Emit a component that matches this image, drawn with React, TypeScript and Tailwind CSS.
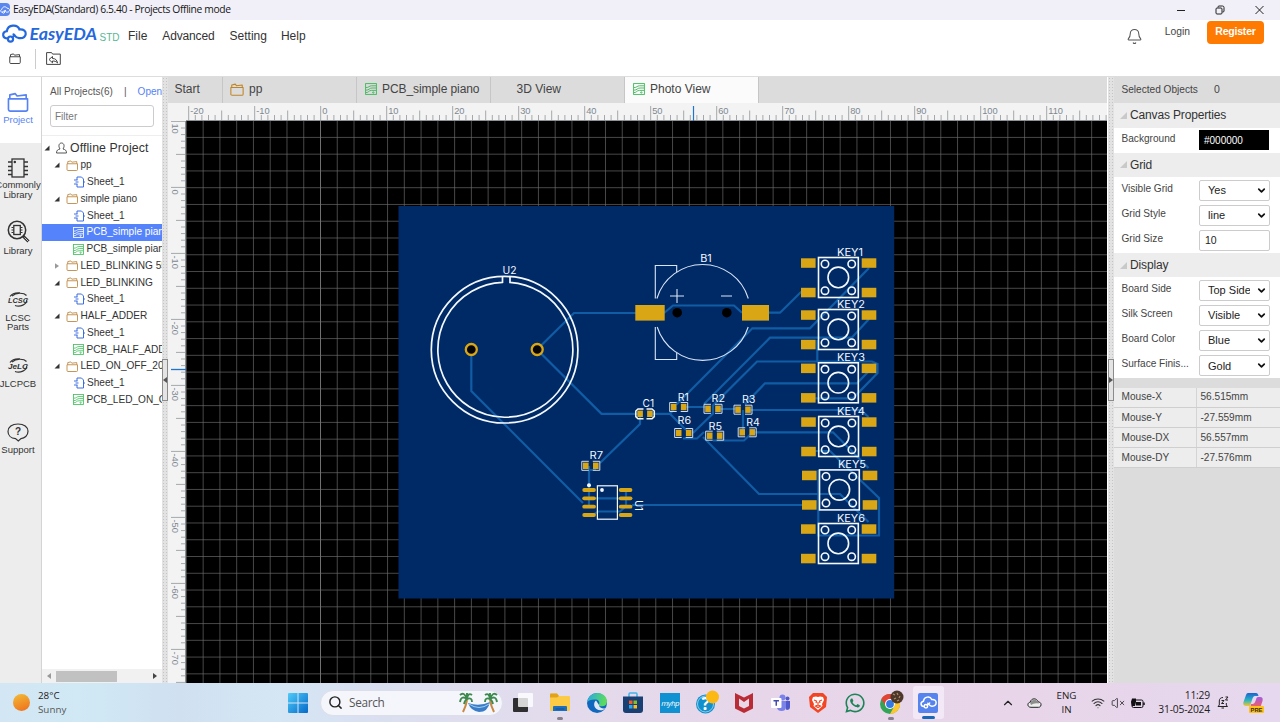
import React from "react";
import { Bell, ChevronDown, ChevronUp, Wifi, VolumeX, Search } from "lucide-react";
import { FaWhatsapp } from "react-icons/fa";

const WHITE = "#f4f8ff";
const GOLD = "#d9a616";
const TRACE = "#115da5";

/* ---------- small icons ---------- */

function FolderIcon({ className, color }: { className: string; color: string }) {
  return (
    <svg className={className} viewBox="0 0 24 22" fill="none" stroke={color} strokeWidth="1.8" strokeLinejoin="round">
      <path d="M1.5 7.5h21v11.5a2 2 0 0 1-2 2h-17a2 2 0 0 1-2-2z" />
      <path d="M3 7.5V3.2l6-1.4 2 2.6 10-1.2v4.3" />
    </svg>
  );
}

function SheetIcon({ className }: { className: string }) {
  return (
    <svg className={className} viewBox="0 0 11 12" fill="none" stroke="#3c6fe0" strokeWidth="1">
      <path d="M3 4V1h4.5L9.5 3v8H3V8M0 4h3.5M0 8h3.5M1.5 6h3M9.5 6H11" />
    </svg>
  );
}

function PcbIcon({ className, color }: { className: string; color: string }) {
  return (
    <svg className={className} viewBox="0 0 12 12" fill="none" stroke={color} strokeWidth=".9">
      <rect x=".6" y=".6" width="10.800" height="10.800" />
      <path d="M1 4.600C4 4.600 4 2.800 6.500 2.800H11M1 7.200C4.500 7.200 4 5 7 5h4M1 9.600c3 0 2.500-2.200 5.500-2.200H11" />
      <circle cx="8.300" cy="9.500" r=".7" />
    </svg>
  );
}

function CloudLogo({ className, color }: { className: string; color: string }) {
  return (
    <svg className={className} viewBox="0 0 26 20" fill="none" stroke={color} strokeWidth="2.300" strokeLinecap="round">
      <path d="M6 16.200C.5 16 0 9.200 5.200 8 6 .8 15.500-.6 18 5.300c4.500-.6 7 2.200 6.700 5.500-.3 3.500-3.500 5-6.700 4.800-3 0-4-2.300-6-4.500" />
      <circle cx="9" cy="15.800" r="2.600" />
      <path d="M11.300 14l3.500-3.200" />
    </svg>
  );
}

function Arrow({ open, className }: { open: boolean; className: string }) {
  return open ? (
    <svg className={className} viewBox="0 0 6 6"><path d="M5.500.5v5h-5z" fill="#333" /></svg>
  ) : (
    <svg className={className} viewBox="0 0 6 6"><path d="M1 .2l4 2.800-4 2.800z" fill="#999" /></svg>
  );
}

/* ---------- header ---------- */

function TitleBar() {
  return (
    <div className="flex h-[19.500px] shrink-0 items-center bg-[#f1f0f8]">
      <div className="flex h-[13px] w-[10px] items-center overflow-hidden rounded-r-sm bg-[#5b86ef]">
        <CloudLogo className="h-[8px] w-[10px] shrink-0" color="#fff" />
      </div>
      <span className="ml-[3px] flex-1 whitespace-nowrap font-['Open_Sans',sans-serif] text-[10.300px] tracking-[-0.370px] text-[#161616]">
        EasyEDA(Standard) 6.5.40 - Projects Offline mode
      </span>
      <svg className="mr-[14px] h-[12px] w-[92px]" viewBox="0 0 92 12" fill="none" stroke="#222" strokeWidth="1">
        <path d="M3 6.500h8M81.500 2l8 8M89.500 2l-8 8" />
        <rect x="42" y="4" width="6" height="6" rx="1" />
        <path d="M44 3.500V3a1 1 0 0 1 1-1h3.500a1.500 1.500 0 0 1 1.500 1.500V7a1 1 0 0 1-1 1h-.5" />
      </svg>
    </div>
  );
}

function MenuBar() {
  return (
    <div className="flex h-[29.500px] shrink-0 items-start bg-white text-[12px] text-[#333]">
      <svg className="h-[29px] w-[128px] shrink-0" viewBox="0 0 128 29">
        <g transform="translate(1.500 4.500)" fill="none" stroke="#2468dc" strokeWidth="2.200" strokeLinecap="round">
          <path d="M6.500 14C.3 14 .3 7.600 5.300 6.700 6.500-.3 16-.5 18 5c4.500-.3 6.500 2 6.200 4.600-.4 3-3.200 4.300-6.700 4-3-.2-3.500-1.500-5.500-3.800" />
          <circle cx="9" cy="14.600" r="2.600" />
          <path d="M11 12.800l2-2" />
        </g>
        <text x="29.500" y="19.500" textLength="67.500" lengthAdjust="spacingAndGlyphs" fontFamily="Lato" fontWeight="700" fontStyle="italic" fontSize="17" fill="#2468dc">EasyEDA</text>
        <text x="99.500" y="20.500" textLength="20" lengthAdjust="spacingAndGlyphs" fontFamily="Liberation Sans" fontSize="11" fill="#58b794">STD</text>
      </svg>
      <nav className="flex flex-1 gap-[15px] pt-[8px] text-[12px] leading-[16px]">
        <span>File</span>
        <span className="tracking-[-0.150px]">Advanced</span>
        <span>Setting</span>
        <span className="-ml-[1px]">Help</span>
      </nav>
      <Bell className="mr-[22px] mt-[8px] h-[17px] w-[17px]" color="#555" strokeWidth={1.500} />
      <span className="mr-[17px] mt-[5.500px] text-[10.300px] leading-[14px] text-[#444]">Login</span>
      <button className="mr-[16px] mt-[1px] h-[23px] w-[57px] rounded-[4px] bg-[#ff7a00] text-[10.500px] font-bold tracking-[-0.200px] text-white">
        Register
      </button>
    </div>
  );
}

function ToolBar() {
  return (
    <div className="flex h-[28px] shrink-0 items-start border-b border-[#ddd] bg-white">
      <FolderIcon className="ml-[9px] mt-[4px] h-[11px] w-[12px]" color="#333" />
      <div className="ml-[14px] h-[20px] w-px bg-[#ccc]" />
      <svg className="ml-[10px] mt-[3px] h-[13px] w-[15px]" viewBox="0 0 15 13" fill="none" stroke="#444" strokeWidth="1">
        <path d="M.6 12.400V.6h5l1 1.500h7.700v10.300z" />
        <path d="M3 7.500l3.500-3v2c3 0 4.500 1.500 5 4.500-1.500-1.800-3-2-5-2v1.800z" />
      </svg>
    </div>
  );
}

/* ---------- left navigation ---------- */

function NavItem({ icon, lines, className }: { icon: React.ReactNode; lines: string[]; className: string }) {
  return (
    <div className={`flex flex-col items-center text-center text-[9.500px] leading-[9.700px] text-[#333] ${className}`}>
      {icon}
      {lines.map((l) => (
        <span key={l} className="whitespace-nowrap">{l}</span>
      ))}
    </div>
  );
}

function LogoMark({ text }: { text: string }) {
  return (
    <svg className="h-[16px] w-[22px]" viewBox="0 0 22 16" fill="none" stroke="#333" strokeWidth="1.200">
      <path d="M5 4C9 .3 17 .5 19.500 3.500M8 13.500c5 2 12-1 11.800-6M3 4.500C5 1.500 9 .5 13 .8" />
      <text x="1" y="11.300" textLength={20} lengthAdjust="spacingAndGlyphs" fontFamily="Liberation Sans" fontSize="8" fontWeight="700" fontStyle="italic" fill="#333" stroke="none">{text}</text>
    </svg>
  );
}

function SideNav() {
  return (
    <div className="flex w-[42px] shrink-0 flex-col overflow-hidden border-r border-[#d4d4d4] bg-[#ededed]">
      <div className="-mr-px h-[66px] shrink-0 bg-white pt-[15px]">
        <div className="flex w-[36px] flex-col items-center text-center text-[9.500px] leading-[10px] text-[#5583f5]">
          <FolderIcon className="mb-[3px] h-[20px] w-[24px]" color="#5583f5" />
          Project
        </div>
      </div>
      <NavItem
        className="-ml-[2px] w-[40px] pt-[15px]"
        icon={
          <svg className="mb-[2px] h-[20px] w-[22px]" viewBox="0 0 22 20" fill="none" stroke="#333" strokeWidth="1.300">
            <rect x="5" y="1" width="12" height="18" />
            <path d="M1 4h4M1 8.500h4M1 12.500h4M1 16.500h4M17 4h4M17 8.500h4M17 12.500h4M17 16.500h4" />
            <circle cx="7.800" cy="4" r=".6" />
          </svg>
        }
        lines={["Commonly", "Library"]}
      />
      <NavItem
        className="w-[36px] pt-[21px]"
        icon={
          <svg className="mb-[3px] h-[23px] w-[23px]" viewBox="0 0 23 23" fill="none" stroke="#333" strokeWidth="1.500">
            <circle cx="10" cy="10" r="8.700" />
            <path d="M16 16l5.500 5.500" strokeWidth="3" />
            <path d="M17.500 17.500l4 4" stroke="#ededed" strokeWidth=".8" />
            <rect x="6.800" y="5.500" width="6.500" height="9" strokeWidth="1.300" />
            <path d="M4.500 7.500h2M4.500 10h2M4.500 12.500h2M13.500 7.500h2M13.500 10h2M13.500 12.500h2" strokeWidth="1" />
          </svg>
        }
        lines={["Library"]}
      />
      <NavItem className="w-[36px] pt-[35.500px]" icon={<div className="mb-[5px] h-[16px]"><LogoMark text="LCSC" /></div>} lines={["LCSC", "Parts"]} />
      <NavItem className="w-[36px] pt-[26px]" icon={<div className="mb-[4.500px] h-[16px]"><LogoMark text="JeLC" /></div>} lines={["JLCPCB"]} />
      <NavItem
        className="w-[36px] pt-[35px]"
        icon={
          <svg className="mb-[2.500px] h-[19px] w-[22px]" viewBox="0 0 22 19" fill="none" stroke="#333" strokeWidth="1.200">
            <path d="M8.500 15.600C4 15.300 1 12.400 1 8.500 1 4 5 1 11 1s10 3 10 7.300c0 4.500-3.500 7-7 7.300L11.300 18z" />
            <text x="11" y="12" textAnchor="middle" fontFamily="Liberation Sans" fontWeight="700" fontSize="10" fill="#333" stroke="none">?</text>
          </svg>
        }
        lines={["Support"]}
      />
    </div>
  );
}

type Row = { kind: "folder" | "sheet" | "pcb"; label: string; open?: boolean; selected?: boolean };

const rows: Row[] = [
  { kind: "folder", label: "pp", open: true },
  { kind: "sheet", label: "Sheet_1" },
  { kind: "folder", label: "simple piano", open: true },
  { kind: "sheet", label: "Sheet_1" },
  { kind: "pcb", label: "PCB_simple piano", selected: true },
  { kind: "pcb", label: "PCB_simple piano" },
  { kind: "folder", label: "LED_BLINKING 555", open: false },
  { kind: "folder", label: "LED_BLINKING", open: true },
  { kind: "sheet", label: "Sheet_1" },
  { kind: "folder", label: "HALF_ADDER", open: true },
  { kind: "sheet", label: "Sheet_1" },
  { kind: "pcb", label: "PCB_HALF_ADDER" },
  { kind: "folder", label: "LED_ON_OFF_2024", open: true },
  { kind: "sheet", label: "Sheet_1" },
  { kind: "pcb", label: "PCB_LED_ON_OFF" },
];

function Tree() {
  return (
    <div className="flex w-[120px] shrink-0 flex-col overflow-hidden bg-white text-[10.100px] text-[#333]">
      <div className="flex h-[28px] items-center whitespace-nowrap pl-[8px] text-[10px] text-[#555]">
        <span className="tracking-[0.050px]">All Projects(6)</span>
        <span className="ml-[11px]">|</span>
        <span className="ml-[11px] text-[#5583f5]">Open</span>
      </div>
      <div className="ml-[8px] flex h-[22px] w-[104px] shrink-0 items-center rounded-[3px] border border-[#ccc] pl-[4px] text-[10px] text-[#777]">
        Filter
      </div>
      <div className="mt-[8px] flex h-[22px] shrink-0 items-center whitespace-nowrap border-t border-[#eee] pl-[2px] pt-[3px] text-[12.300px]">
        <Arrow open className="h-[6px] w-[6px] shrink-0" />
        <svg className="ml-[6px] mr-[3px] h-[12px] w-[11px]" viewBox="0 0 11 12" fill="none" stroke="#555" strokeWidth="1">
          <path d="M4 7C2 4 3 1 5.500 1S9 4 7 7c2 .6 3.500 1 3.500 4H.5c0-3 1.500-3.400 3.500-4z" />
        </svg>
        <span className="tracking-[0.100px]">Offline Project</span>
      </div>
      {rows.map((r, i) => (
        <div
          key={i}
          className={`flex h-[16.750px] shrink-0 items-center whitespace-nowrap ${r.selected ? "bg-[#5583fb] text-white" : ""}`}
        >
          {r.kind === "folder" ? (
            <>
              <Arrow open={!!r.open} className="ml-[12px] mr-[6px] h-[6px] w-[6px] shrink-0" />
              <FolderIcon className="mr-[2px] h-[11px] w-[12.500px] shrink-0" color="#bf8a45" />
            </>
          ) : r.kind === "sheet" ? (
            <SheetIcon className="ml-[32px] mr-[2px] h-[12px] w-[11px] shrink-0" />
          ) : (
            <PcbIcon className="ml-[31px] mr-[2.500px] h-[11px] w-[11px] shrink-0" color={r.selected ? "#fff" : "#3fbf5a"} />
          )}
          <span className="-mt-px">{r.label}</span>
        </div>
      ))}
      <div className="mt-auto flex h-[14px] shrink-0 items-center bg-[#f1f1f1]">
        <svg className="ml-[4px] h-[6px] w-[6px]" viewBox="0 0 6 6"><path d="M5 0v6L1 3z" fill="#999" /></svg>
        <div className="ml-[4px] h-[11px] w-[61px] bg-[#c1c1c1]" />
        <svg className="ml-[35px] h-[6px] w-[6px]" viewBox="0 0 6 6"><path d="M1 0v6l4-3z" fill="#444" /></svg>
      </div>
    </div>
  );
}

function Splitter({ dir }: { dir: "left" | "right" }) {
  return (
    <div className="flex w-[6px] shrink-0 flex-col bg-[#e2e2e2] bg-[radial-gradient(#c4c4c4_0.700px,transparent_0.800px)] bg-[length:3px_3px]">
      <div className="mt-[282px] flex h-[42px] w-full items-center justify-center border border-[#8b8b8b] bg-[#e4e4e4]">
        <svg className="h-[6px] w-[4px] shrink-0" viewBox="0 0 4 6">
          <path d={dir === "left" ? "M4 0v6L0 3z" : "M0 0v6l4-3z"} fill="#555" />
        </svg>
      </div>
    </div>
  );
}

/* ---------- centre ---------- */

function Tabs() {
  return (
    <div className="flex h-[26px] shrink-0 items-center bg-[#dcdcdc] text-[12px] text-[#444]">
      <div className="flex h-full w-[55px] items-center border-r border-[#c6c6c6] pb-[2px] pl-[6.500px]">Start</div>
      <div className="flex h-full w-[134px] items-center gap-[5px] border-r border-[#c6c6c6] pb-[2px] pl-[7px]">
        <FolderIcon className="h-[13px] w-[14px]" color="#bf8427" />pp
      </div>
      <div className="flex h-full w-[133.500px] items-center gap-[5px] whitespace-nowrap border-r border-[#c6c6c6] pb-[2px] pl-[8px] tracking-[-0.080px]">
        <PcbIcon className="h-[12px] w-[12px]" color="#3db757" />PCB_simple piano
      </div>
      <div className="flex h-full w-[134px] items-center border-r border-[#c6c6c6] pb-[2px] pl-[26px]">3D View</div>
      <div className="flex h-full w-[134px] items-center gap-[5.500px] border-r border-[#c6c6c6] bg-[#fbfbfb] pb-[2px] pl-[8px]">
        <PcbIcon className="h-[12px] w-[12px]" color="#3db757" />Photo View
      </div>
    </div>
  );
}

const range = (a: number, b: number) => Array.from({ length: b - a + 1 }, (_, i) => a + i);

function TopRuler() {
  return (
    <svg className="block h-[18px] w-[939px] shrink-0 bg-[#f3f3f3]" viewBox="168 103 939 18">
      {range(-20, 119).map((n) => {
        const x = 320.7 + n * 6.6;
        const top = n % 10 === 0 ? 106 : n % 5 === 0 ? 110.5 : 115;
        return (
          <g key={n}>
            <path d={`M${x} ${top}V120`} stroke="#a4a8ac" strokeWidth="1" />
            {n % 10 === 0 && (
              <text x={x + 1.5} y="113.500" fontFamily="Liberation Sans" fontSize="9.300" fill="#7d8891">{n}</text>
            )}
          </g>
        );
      })}
      <path d="M186 120.500H1107" stroke="#8d9297" />
      <path d="M693.500 106V121" stroke="#1f74cc" strokeWidth="1.200" />
    </svg>
  );
}

function LeftRuler() {
  return (
    <svg className="block h-[562px] w-[18px] shrink-0 bg-[#f3f3f3]" viewBox="168 121 18 562">
      {range(-10, 75).map((n) => {
        const y = 187.4 + n * 6.6;
        const left = n % 10 === 0 ? 171 : n % 5 === 0 ? 176 : 181;
        return (
          <g key={n}>
            <path d={`M${left} ${y}H185`} stroke="#a4a8ac" strokeWidth="1" />
            {n % 10 === 0 && (
              <text transform={`translate(171.800 ${y + 2}) rotate(90)`} fontFamily="Liberation Sans" fontSize="9.300" fill="#7d8891">{-n}</text>
            )}
          </g>
        );
      })}
      <path d="M185.500 121V683" stroke="#8d9297" />
      <path d="M171 369.500H186" stroke="#1f74cc" strokeWidth="1.300" />
    </svg>
  );
}

const traces = [
  "M471.300 349.500V391L583 503",
  "M537 349.500L574 313H636",
  "M537 349.500L601.500 413.800H638",
  "M664 313L673 305.500H734L742 312.700",
  "M769 312.700H780L801 292H808",
  "M869 268L810 328.300H752.300L676 405",
  "M869 319L851.700 337.700H770L704 404",
  "M808 398.300H853L877.500 373V364L872 361.500H757L713 405.500V413.500L693 433",
  "M817.300 340V362",
  "M869 371L857 383.300H765L745 404",
  "M748 410H861L868.500 417",
  "M752 432.300H833L868.500 468",
  "M808 451H830L879 498V535.500H818.300V470",
  "M632 505H808",
  "M703 437L759 494H840L868.500 522",
  "M683 438.500H697L704 432",
  "M713 440.500H744L752 433",
  "M743 410V432",
  "M684 407H708M718 409H738",
  "M651 413.800H670L686 430M670 413.800L676 407",
  "M640 415V424L600 463",
  "M596 470H589M589 466V490V506",
  "M589 498.300H626M593 515L598 511.500H620L626 506V490",
];

const keys = [
  { name: "KEY1", dx: 0, dy: 0, tx: 850, ty: 256 },
  { name: "KEY2", dx: 0, dy: 52, tx: 851, ty: 307.7 },
  { name: "KEY3", dx: 0, dy: 105.3, tx: 851, ty: 361 },
  { name: "KEY4", dx: 0.2, dy: 159, tx: 851, ty: 414.7 },
  { name: "KEY5", dx: 1, dy: 212.4, tx: 852, ty: 468.3 },
  { name: "KEY6", dx: 0, dy: 266, tx: 851, ty: 521.7 },
];

const parts = [
  { name: "R1", x: 678.7, y: 407, tx: 683.3, ty: 400.5 },
  { name: "R2", x: 713, y: 408.8, tx: 718.3, ty: 402 },
  { name: "R3", x: 743, y: 409.7, tx: 748.7, ty: 402.7 },
  { name: "R4", x: 747.2, y: 432.3, tx: 753, ty: 425.5 },
  { name: "R5", x: 714.7, y: 435.7, tx: 715.3, ty: 429.7 },
  { name: "R6", x: 683.7, y: 433, tx: 684.3, ty: 423.7 },
  { name: "R7", x: 590.8, y: 465.8, tx: 596.3, ty: 458.5 },
];

function Label({ x, y, w, children }: { x: number; y: number; w: number; children: string }) {
  return (
    <text x={x - w / 2} y={y} textLength={w} lengthAdjust="spacingAndGlyphs" fontFamily="Inter" fontWeight="400" fontSize="10.300" fill={WHITE}>
      {children}
    </text>
  );
}

function Board() {
  return (
    <svg className="block h-[562px] w-[921px] bg-black" viewBox="186 121 921 562">
      <g stroke="#707070" strokeWidth=".65">
        {range(-8, 46).map((n) => <path key={n} d={`M${320.5 + n * 16.764} 121V683`} />)}
        {range(-3, 29).map((n) => <path key={n} d={`M186 ${187.7 + n * 16.764}H1107`} />)}
      </g>
      <path d="M320.500 121V683" stroke="#707070" />
      <rect x="398.500" y="206" width="495.700" height="392.500" fill="#002a66" />
      <g fill="none" stroke={TRACE} strokeWidth="2.200">
        {traces.map((d) => <path key={d} d={d} />)}
      </g>

      {/* buzzer */}
      <g fill="none" stroke={WHITE} strokeWidth="1.700">
        <circle cx="504.600" cy="349.700" r="73.300" />
        <path d="M502.500 276.500V282.300A67.500 67.500 0 1 0 510 282.400V276.700" />
      </g>
      {[471.3, 537.2].map((x) => (
        <circle key={x} cx={x} cy="349.500" r="5.500" fill="#050505" stroke={GOLD} strokeWidth="2.300" />
      ))}
      <Label x={509.5} y={273.5} w={14}>U2</Label>

      {/* battery */}
      <g fill="none" stroke="#d9e4f7" strokeWidth="1.100">
        <path d="M656.900 298.500A47.700 47.700 0 0 1 748.300 298.500" />
        <path d="M657.200 327A47.700 47.700 0 0 0 748.200 327" />
        <path d="M655.300 298.500V265.500H676.700V272M655.300 327V359.500H676.700V352.700" />
        <path d="M670 296H684M677 289V303M721 296H732" />
      </g>
      <rect x="635.300" y="305" width="29.400" height="15.600" fill={GOLD} />
      <rect x="742" y="305" width="27" height="15.600" fill={GOLD} />
      <circle cx="677.200" cy="312.700" r="4.800" fill="#000" />
      <circle cx="726.800" cy="312.700" r="4.800" fill="#000" />
      <Label x={706} y={261.7} w={11.5}>B1</Label>

      {/* push buttons */}
      {keys.map((k) => (
        <g key={k.name}>
          <g transform={`translate(${k.dx} ${k.dy})`}>
            {[[801, 258.3], [861.7, 258.3], [801, 287.8], [861.7, 287.8]].map(([x, y]) => (
              <rect key={`${x}-${y}`} x={x} y={y} width="14.600" height="9.500" fill={GOLD} />
            ))}
            <g fill="none" stroke={WHITE} strokeWidth="1.600">
              <rect x="818.500" y="257.500" width="39.800" height="40" />
              <circle cx="838.300" cy="277.400" r="10.300" />
              {[[825, 264], [851.700, 264], [825, 290.7], [851.700, 290.7]].map(([x, y]) => (
                <circle key={`${x}-${y}`} cx={x} cy={y} r="3.700" />
              ))}
            </g>
          </g>
          <Label x={k.tx} y={k.ty} w={k.name === "KEY1" ? 26 : 28}>{k.name}</Label>
        </g>
      ))}

      {/* chip resistors */}
      {parts.map((p) => (
        <g key={p.name}>
          <path
            d={`M${p.x - 2} ${p.y - 4.5}H${p.x - 9}V${p.y + 4.5}H${p.x - 2}M${p.x + 2} ${p.y - 4.5}H${p.x + 9}V${p.y + 4.5}H${p.x + 2}`}
            fill="none" stroke="#d3def0" strokeWidth="1"
          />
          <rect x={p.x - 7.8} y={p.y - 3.2} width="5.600" height="6.400" fill={GOLD} />
          <rect x={p.x + 2.2} y={p.y - 3.2} width="5.600" height="6.400" fill={GOLD} />
          <Label x={p.tx} y={p.ty} w={p.name === "R1" ? 11 : 13.5}>{p.name}</Label>
        </g>
      ))}

      {/* capacitor */}
      <path d="M643.500 409H638L635.800 411V416.600L638 418.800H643.500M646.500 409H652L654.300 411V416.600L652 418.800H646.500" fill="none" stroke={WHITE} strokeWidth="1.500" />
      <rect x="637.300" y="410.600" width="5.600" height="6.400" fill={GOLD} />
      <rect x="647.100" y="410.600" width="5.600" height="6.400" fill={GOLD} />
      <Label x={648.3} y={407.2} w={11.5}>C1</Label>

      {/* timer chip */}
      {[490, 498.3, 506.7, 515].map((y) => (
        <g key={y} fill={GOLD}>
          <rect x="582.300" y={y - 1.900} width="13.600" height="3.800" rx="1.900" />
          <rect x="618.800" y={y - 1.900} width="13.600" height="3.800" rx="1.900" />
        </g>
      ))}
      <rect x="597.400" y="485.800" width="20" height="33.400" fill="none" stroke={WHITE} strokeWidth="1.200" />
      <circle cx="602" cy="490" r="1.900" fill={WHITE} />
      <circle cx="589" cy="485.300" r="2" fill={WHITE} />
      <g transform="translate(634.700 505.500) rotate(90)"><Label x={0} y={0} w={10.5}>U1</Label></g>
    </svg>
  );
}

/* ---------- properties ---------- */

function Section({ title }: { title: string }) {
  return (
    <div className="flex h-[24.500px] shrink-0 items-center bg-[#ededed] pl-[6px] text-[12px] tracking-[-0.150px] text-[#333]">
      <svg className="mr-[3px] h-[7px] w-[7px]" viewBox="0 0 7 7"><path d="M7 0v7H0z" fill="#c9c9c9" /></svg>
      {title}
    </div>
  );
}

function Field({ label, value, kind = "select" }: { label: string; value: string; kind?: "select" | "input" | "color" }) {
  return (
    <div className="flex h-[25.200px] shrink-0 items-center bg-white">
      <span className="mb-[3px] w-[85px] shrink-0 whitespace-nowrap pl-[7.500px] text-[10.100px] text-[#444]">{label}</span>
      {kind === "color" ? (
        <div className="flex h-[20px] w-[70px] items-center bg-black pl-[5px] text-[10px] text-white">{value}</div>
      ) : (
        <div className="mt-[1px] flex h-[21px] w-[71px] items-center rounded-[2px] border border-[#ccc] bg-white text-[11px] text-[#222]">
          {kind === "input" ? (
            <span className="pl-[5px] text-[10.500px]">{value}</span>
          ) : (
            <>
              <span className="ml-[8px] w-[42px] overflow-hidden whitespace-nowrap">{value}</span>
              <ChevronDown className="ml-[5.500px] h-[11px] w-[11px] shrink-0" color="#111" strokeWidth={3.700} />
            </>
          )}
        </div>
      )}
    </div>
  );
}

function Properties() {
  return (
    <div className="flex w-[166px] shrink-0 flex-col bg-[#dcdcdc]">
      <div className="flex h-[26px] shrink-0 items-center pl-[7.500px] text-[10.500px] text-[#444]">
        <span className="w-[92.500px] text-[10.100px]">Selected Objects</span>
        <span>0</span>
      </div>
      <Section title="Canvas Properties" />
      <Field label="Background" value="#000000" kind="color" />
      <Section title="Grid" />
      <Field label="Visible Grid" value="Yes" />
      <Field label="Grid Style" value="line" />
      <Field label="Grid Size" value="10" kind="input" />
      <Section title="Display" />
      <Field label="Board Side" value="Top Side" />
      <Field label="Silk Screen" value="Visible" />
      <Field label="Board Color" value="Blue" />
      <Field label="Surface Finis..." value="Gold" />
      <div className="h-[9.500px] shrink-0" />
      {[["Mouse-X", "56.515mm"], ["Mouse-Y", "-27.559mm"], ["Mouse-DX", "56.557mm"], ["Mouse-DY", "-27.576mm"]].map(([k, v]) => (
        <div key={k} className="flex h-[20.100px] shrink-0 items-center border-b border-[#cfcfcf] bg-[#ededed] text-[10.100px] text-[#444]">
          <span className="flex h-full w-[83px] items-center border-r border-[#d4d4d4] pl-[7.500px]">{k}</span>
          <span className="pl-[3.500px]">{v}</span>
        </div>
      ))}
    </div>
  );
}

/* ---------- taskbar ---------- */

function Palm({ x, flip }: { x: number; flip?: boolean }) {
  return (
    <g transform={`translate(${x} 0)${flip ? " scale(-1 1)" : ""}`}>
      <path d="M8 8Q7 14 4 20" stroke="#c98740" strokeWidth="2" fill="none" />
      <path d="M8 7Q2 3 1 10M8 7Q5-1 1 3M8 7Q9 0 13 3M8 7Q13 5 13 10M8 7Q6 8 5 12M8 7L8 1" stroke="#3c8a4d" strokeWidth="1.900" fill="none" />
    </g>
  );
}

function Cell({ children, mark }: { children: React.ReactNode; mark?: "dot" | "bar" }) {
  return (
    <div className="flex h-full w-[36.850px] shrink-0 flex-col items-center pt-[3px]">
      <div className={`flex h-[33px] w-[31px] items-center justify-center rounded-[3px] ${mark === "bar" ? "bg-[#f3e9f6]" : ""}`}>{children}</div>
      {mark === "dot" && <div className="-mt-[2px] h-[2.500px] w-[6px] rounded-full bg-[#85808a]" />}
      {mark === "bar" && <div className="-mt-[3px] h-[3px] w-[13px] rounded-full bg-[#1769b8]" />}
    </div>
  );
}

function Taskbar() {
  return (
    <div className="flex h-[39px] shrink-0 items-center bg-[linear-gradient(90deg,#d3e6f3_0%,#d0e9f5_6%,#d0e0f1_14%,#d4e6f4_21%,#dadff0_30%,#e2dced_42%,#e7d6ea_58%,#e8d5e9_80%,#e6d8ee_100%)] font-['Open_Sans',sans-serif] text-[#222]">
      <div className="ml-[13px] h-[17px] w-[17px] rounded-full bg-[linear-gradient(160deg,#f2bd38,#ee6d1a)]" />
      <div className="ml-[8px] w-[249.500px] text-[9.800px] leading-[13.500px]">
        <div>28°C</div>
        <div className="text-[#555]">Sunny</div>
      </div>
      <svg className="h-[20px] w-[20px] shrink-0" viewBox="0 0 20 20">
        <defs>
          <linearGradient id="win" x1="0" y1="0" x2="1" y2="1"><stop stopColor="#4fcbf8" /><stop offset="1" stopColor="#0569c9" /></linearGradient>
        </defs>
        <path d="M0 1a1 1 0 0 1 1-1h8.500v9.500H0zM10.500 0H19a1 1 0 0 1 1 1v8.500h-9.500zM0 10.500h9.500V20H1a1 1 0 0 1-1-1zM10.500 10.500H20V19a1 1 0 0 1-1 1h-8.500z" fill="url(#win)" />
      </svg>
      <div className="ml-[12px] flex h-[26px] w-[183px] shrink-0 items-center rounded-full border border-[#dcdfea] bg-[#f4f6fc]">
        <Search className="ml-[7px] h-[15px] w-[15px]" color="#222" strokeWidth={2.300} />
        <span className="ml-[6.500px] flex-1 text-[11.800px] tracking-[-0.300px] text-[#555]">Search</span>
        <svg className="mr-[4px] h-[21px] w-[39px]" viewBox="0 0 39 21">
          <path d="M9 11Q20 15 31 10Q29 20 20 20Q12 19 9 11z" fill="#3b7cc9" />
          <path d="M10 12Q20 19 30 12" stroke="#9ed0ef" fill="none" />
          <Palm x={0} />
          <Palm x={39} flip />
        </svg>
      </div>
      <div className="ml-[2px] flex h-full">
        <Cell>
          <svg className="h-[20px] w-[20px]" viewBox="0 0 20 20">
            <rect x="0" y="5" width="15" height="14" rx="1" fill="#2f2f31" />
            <rect x="5" y="0" width="15" height="14" rx="1" fill="#fff" fillOpacity=".8" />
          </svg>
        </Cell>
        <Cell mark="dot">
          <svg className="h-[19px] w-[20px]" viewBox="0 0 20 19">
            <path d="M0 1.500Q0 .5 1 .5h6l2 2.500h10q1 0 1 1V17q0 1-1 1H1q-1 0-1-1z" fill="#fbcb45" />
            <path d="M0 1.500Q0 .5 1 .5h6l2 2.500-2 1.500H0z" fill="#e2a31a" />
            <path d="M3 18v-4q0-1 1-1h12q1 0 1 1v4z" fill="#1c6fc0" />
            <path d="M5.500 16h9" stroke="#0d4c8e" />
          </svg>
        </Cell>
        <Cell>
          <svg className="h-[20px] w-[20px]" viewBox="0 0 20 20">
            <defs>
              <linearGradient id="edge" x1="0" y1="0" x2="1" y2=".2"><stop stopColor="#29a7e8" /><stop offset="1" stopColor="#5bdc5c" /></linearGradient>
            </defs>
            <circle cx="10" cy="10" r="10" fill="#0f68bd" />
            <path d="M0 9.500C1 3.500 5.500 0 10.300 0 16 0 20 4 20 8.500c0 3-2 4.800-5 4.800-2.500 0-3.500-.8-3-1.800.8-1.500.5-4.500-3-5C5 6 1.500 7 0 9.500z" fill="url(#edge)" />
            <path d="M9 7.500c-2.500 2-2.500 6 .5 8.500 3 2 6.500 1.500 9.300-.8C16 16 12 15 12 12z" fill="#dfe9f6" />
          </svg>
        </Cell>
        <Cell>
          <svg className="h-[21px] w-[20px]" viewBox="0 0 20 21">
            <path d="M6 5V2.200Q6 1 7 1h6q1 0 1 1.200V5" fill="none" stroke="#41b4e9" strokeWidth="1.500" />
            <path d="M0 4.500h20V18q0 3-3 3H3q-3 0-3-3z" fill="#193f73" />
            <path d="M6 8.500h3.500V12H6z" fill="#f25a2b" /><path d="M10.500 8.500H14V12h-3.500z" fill="#86bf2a" />
            <path d="M6 13h3.500v3.500H6z" fill="#27a9ee" /><path d="M10.500 13H14v3.500h-3.500z" fill="#fcbf1a" />
          </svg>
        </Cell>
        <Cell>
          <div className="flex h-[20px] w-[20px] items-center justify-center bg-[#1091d1] text-[8px] italic leading-none tracking-[-0.500px] text-white">myhp</div>
        </Cell>
        <Cell>
          <svg className="h-[25px] w-[23px]" viewBox="0 0 23 25">
            <circle cx="9.500" cy="14" r="9.500" fill="#1290cc" />
            <circle cx="9.500" cy="14" r="8" fill="none" stroke="#e7f4fb" strokeWidth=".6" />
            <text x="9.500" y="20" textAnchor="middle" fontFamily="Open Sans" fontWeight="700" fontSize="17" fill="#fff">?</text>
            <circle cx="16.500" cy="7" r="6.500" fill="#fdb913" />
          </svg>
        </Cell>
        <Cell>
          <svg className="h-[20px] w-[18px]" viewBox="0 0 18 20">
            <path d="M0 0l9 4.500L18 0v15.500L9 20l-9-4.500z" fill="#b92c36" />
            <path d="M4 5.500l5 3.500 5-3.500V13l-5 2.500L4 13z" fill="#e9d7e8" />
          </svg>
        </Cell>
        <Cell>
          <svg className="h-[18px] w-[19px]" viewBox="0 0 19 18">
            <circle cx="11.500" cy="3.500" r="3" fill="#7b83eb" /><circle cx="16.500" cy="4.500" r="2" fill="#5059c9" />
            <path d="M12 7h7v6q0 3-3.500 3z" fill="#5059c9" /><path d="M6 7h9v6q0 4-4.500 4T6 13z" fill="#7b83eb" />
            <rect x="0" y="4" width="10.500" height="10" rx="1" fill="#fff" />
            <path d="M2.500 6.800h5.500M5.250 6.800v5" stroke="#444bab" strokeWidth="1.500" />
          </svg>
        </Cell>
        <Cell>
          <svg className="h-[20px] w-[18px]" viewBox="0 0 18 20">
            <path d="M4 0h10l4 4-1 10-8 6-8-6L0 4z" fill="#f14524" />
            <path d="M4 4l3-.5 2 .5 2-.5 3 .5 1 3-2 4 .5 2L9 17l-4.500-4L5 11 3 7z" fill="#fff" />
            <path d="M5 7l2.500 1L7 10M13 7l-2.500 1 .5 2M9 9v3M6.500 13L9 12l2.500 1L9 14.500z" stroke="#f14524" strokeWidth="1.200" fill="none" />
          </svg>
        </Cell>
        <Cell><FaWhatsapp className="h-[22px] w-[22px]" color="#1c8457" /></Cell>
        <Cell mark="dot">
          <svg className="h-[25px] w-[25px]" viewBox="0 0 25 25">
            <circle cx="11" cy="14" r="10" fill="#33a457" />
            <path d="M2.300 9A10 10 0 0 1 20 9.500H11l-4 7z" fill="#e24334" />
            <path d="M20 9.500A10 10 0 0 1 11 24l5-9-2-5.500z" fill="#fcc62f" />
            <circle cx="11" cy="14" r="5" fill="#fff" /><circle cx="11" cy="14" r="3.900" fill="#3479e2" />
            <circle cx="18" cy="7" r="6.500" fill="#4c382b" />
            <path d="M14 4l2 1M18 3l1 2M21 6l-1 2M15 9l2-1M18 11l2-1" stroke="#b58a62" strokeWidth="1.200" />
          </svg>
        </Cell>
        <Cell mark="bar">
          <div className="flex h-[20px] w-[20px] items-center justify-center rounded-[2px] bg-[#5584ee]">
            <CloudLogo className="h-[13px] w-[17px]" color="#fff" />
          </div>
        </Cell>
      </div>
      <div className="ml-auto flex h-full items-center text-[10px] leading-[13.500px]">
        <ChevronUp className="mr-[12px] h-[14px] w-[14px]" color="#222" strokeWidth={2} />
        <svg className="mr-[14px] h-[10px] w-[15px]" viewBox="0 0 15 10">
          <path d="M4 9.300C0 9.300 0 4.500 3.300 4.200 4-.2 10-.2 11 3.800c4 0 4 5.500.5 5.500z" fill="#eee" stroke="#222" />
          <path d="M3 4.500Q6-.3 10.500 3L12 5.500Q7 4.500 4 7z" fill="#8d8d8d" />
        </svg>
        <div className="mr-[14px] w-[21px] text-center text-[9.800px]"><div>ENG</div><div>IN</div></div>
        <Wifi className="mr-[6px] h-[14px] w-[14px]" color="#333" strokeWidth={1.800} />
        <VolumeX className="mr-[6px] h-[14px] w-[14px]" color="#333" strokeWidth={1.500} />
        <svg className="h-[12px] w-[14px]" viewBox="0 0 14 12">
          <rect x="1" y="3" width="11" height="7.500" rx="1.500" fill="none" stroke="#111" />
          <rect x="5" y="5" width="5" height="3.500" fill="#111" /><path d="M13 5.500v2.500" stroke="#111" strokeWidth="1.500" />
          <path d="M1 1.500h4V5L4 9H1L0 5z" fill="#111" />
        </svg>
        <div className="w-[65px] text-right text-[10.300px] tracking-[-0.200px]"><div>11:29</div><div className="whitespace-nowrap">31-05-2024</div></div>
        <svg className="ml-[7px] h-[13px] w-[12px]" viewBox="0 0 12 13" fill="none" stroke="#222" strokeWidth="1">
          <path d="M6 1.500C3.500 1.500 2.300 3 2.300 5v4L1 10.500h9.500L9.300 9V7M4.500 12h2.500M4.500 4.500H7l-2.500 3H7M8.500 1H11L8.500 4H11" />
        </svg>
        <svg className="ml-[14px] mr-[15px] h-[21px] w-[22px]" viewBox="0 0 22 21">
          <defs>
            <linearGradient id="cp1" x1="0" y1="0" x2="0" y2="1"><stop stopColor="#1e62d0" /><stop offset=".55" stopColor="#27b5c4" /><stop offset="1" stopColor="#f3c62f" /></linearGradient>
            <linearGradient id="cp2" x1="0" y1="0" x2="0" y2="1"><stop stopColor="#a35be8" /><stop offset="1" stopColor="#f3605c" /></linearGradient>
          </defs>
          <path d="M5 1h8q2 0 2.500 3H12q-2 0-3 4l-2 6H3q-3.500 0-2.500-4L3 3q.5-2 2-2z" fill="url(#cp1)" />
          <path d="M17 5q3.500 0 2.500 4l-2 6H9q-2 0-1-3h2q1.500 0 2.500-3l1-3q.5-1 2-1z" fill="url(#cp2)" />
          <rect x="6" y="14" width="15" height="7" rx="1" fill="#fdc21d" />
          <text x="13.500" y="19.800" textAnchor="middle" fontFamily="Liberation Sans" fontWeight="700" fontSize="5.800" fill="#3b2b00">PRE</text>
        </svg>
      </div>
    </div>
  );
}

export default function App() {
  return (
    <div className="flex h-[722px] w-[1280px] flex-col overflow-hidden bg-white font-['Liberation_Sans',Arial,sans-serif]">
      <TitleBar />
      <MenuBar />
      <ToolBar />
      <div className="flex min-h-0 flex-1">
        <SideNav />
        <Tree />
        <Splitter dir="left" />
        <div className="flex w-[939px] shrink-0 flex-col">
          <Tabs />
          <TopRuler />
          <div className="flex">
            <LeftRuler />
            <Board />
          </div>
        </div>
        <div className="w-[1px] shrink-0 bg-white" />
        <Splitter dir="right" />
        <Properties />
      </div>
      <Taskbar />
    </div>
  );
}
